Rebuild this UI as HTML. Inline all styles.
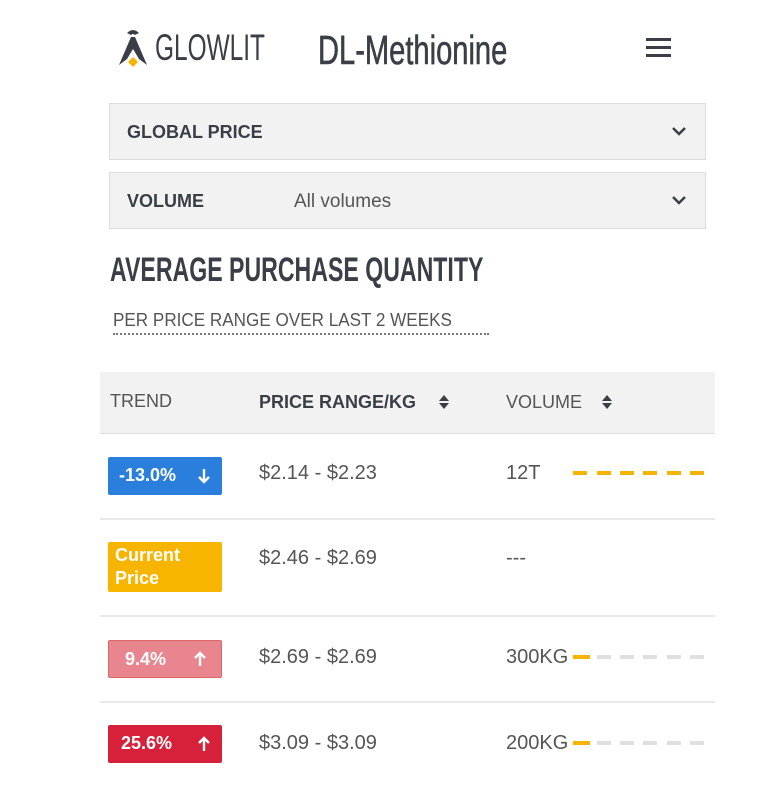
<!DOCTYPE html>
<html><head><style>
body{margin:0;background:#fff;width:783px;height:786px;overflow:hidden;font-family:"Liberation Sans",sans-serif;color:#444;position:relative}
.a{position:absolute}
.cond{display:inline-block;transform:scaleX(.78);transform-origin:left center;white-space:nowrap}
.dd{position:absolute;left:109px;width:597px;height:57px;background:#f2f2f2;border:1px solid #ddd;box-sizing:border-box}
.dd b{position:absolute;left:17px;top:18px;font-size:18px;color:#3a3f47}
.chev{position:absolute;right:18px;top:21px}
.badge{position:absolute;left:108px;width:114px;border-radius:2px;color:#fff;font-weight:bold;font-size:18px;box-sizing:border-box}
.pr{position:absolute;left:259px;font-size:19px;color:#555}
.vol{position:absolute;left:506px;font-size:19px;color:#555}
.sep{position:absolute;left:100px;width:615px;height:2px;background:#e8e8e8}
.bars{position:absolute;left:573px;width:134px;height:4px}
.bars i{position:absolute;top:0;width:14px;height:4px;background:#e0e0e0}
.ar{position:absolute;top:10px}
</style></head><body>
<svg class="a" style="left:117px;top:27px" width="32" height="42" viewBox="0 0 32 42">
<path d="M10 6 Q16 0 22 6 L18 8 Q16 6 14 8Z" fill="#3a3f47"/>
<path d="M14 10 L18 10 L30 38 L22 32 L16 22 L10 32 L2 38Z" fill="#3a3f47"/>
<path d="M16 30 L21 35 L16 40 L11 35Z" fill="#f5b400"/>
</svg>
<div class="a" style="left:155px;top:27px;font-size:37px;color:#3a3f47"><span class="cond" style="transform:scaleX(.66)">GLOWLIT</span></div>
<div class="a" style="left:318px;top:27px;font-size:41px;color:#3a3f47;-webkit-text-stroke:.6px #3a3f47"><span class="cond" style="transform:scaleX(.71)">DL-Methionine</span></div>
<div class="a" style="left:646px;top:38px;width:25px;height:3px;background:#3a3f47"></div>
<div class="a" style="left:646px;top:46px;width:25px;height:3px;background:#3a3f47"></div>
<div class="a" style="left:646px;top:54px;width:25px;height:3px;background:#3a3f47"></div>
<div class="dd" style="top:103px"><b>GLOBAL PRICE</b><svg class="chev" width="16" height="12"><path d="M2 3 L8 9 L14 3" stroke="#3a3f47" stroke-width="2.5" fill="none"/></svg></div>
<div class="dd" style="top:172px"><b>VOLUME</b><span style="position:absolute;left:184px;top:18px;font-size:19px;color:#555">All volumes</span><svg class="chev" width="16" height="12"><path d="M2 3 L8 9 L14 3" stroke="#3a3f47" stroke-width="2.5" fill="none"/></svg></div>
<div class="a" style="left:110px;top:251px;font-size:34px;font-weight:bold;color:#3a3f47"><span class="cond" style="transform:scaleX(.68)">AVERAGE PURCHASE QUANTITY</span></div>
<div class="a" style="left:113px;top:310px;font-size:18px;color:#555;border-bottom:2px dotted #777;padding-bottom:2px;width:376px;white-space:nowrap;overflow:hidden"><span class="cond" style="transform:scaleX(.95)">PER PRICE RANGE OVER LAST 2 WEEKS</span></div>
<div class="a" style="left:100px;top:372px;width:615px;height:61px;background:#f2f2f2;border-bottom:1px solid #e0e0e0"></div>
<div class="a" style="left:110px;top:391px;font-size:18px;color:#555">TREND</div>
<div class="a" style="left:259px;top:392px;font-size:18px;font-weight:bold;color:#3a3f47">PRICE RANGE/KG</div>
<svg class="a" style="left:438px;top:394px" width="12" height="16"><path d="M1 7 L6 1 L11 7Z M1 9 L6 15 L11 9Z" fill="#3a3f47"/></svg>
<div class="a" style="left:506px;top:392px;font-size:18px;color:#555">VOLUME</div>
<svg class="a" style="left:601px;top:394px" width="12" height="16"><path d="M1 7 L6 1 L11 7Z M1 9 L6 15 L11 9Z" fill="#3a3f47"/></svg>
<div class="badge" style="top:457px;height:38px;background:#2a7fdc;padding:8px 0 0 11px">-13.0%<svg class="ar" style="left:89px" width="14" height="18"><path d="M7 2 V15 M2 10 L7 15 L12 10" stroke="#fff" stroke-width="2.4" fill="none"/></svg></div>
<div class="pr" style="top:462px;font-size:20px">$2.14 - $2.23</div>
<div class="vol" style="top:462px;font-size:20px">12T</div>
<div class="bars" style="top:471px"><i style="left:0;background:#f5b400"></i><i style="left:24px;background:#f5b400"></i><i style="left:47px;background:#f5b400"></i><i style="left:70px;background:#f5b400"></i><i style="left:94px;background:#f5b400"></i><i style="left:117px;background:#f5b400"></i></div>
<div class="sep" style="top:518px"></div>
<div class="badge" style="top:542px;height:50px;background:#f8b500;padding:2px 0 0 7px;line-height:23px">Current<br>Price</div>
<div class="pr" style="top:547px;font-size:20px">$2.46 - $2.69</div>
<div class="vol" style="top:547px;font-size:20px">---</div>
<div class="sep" style="top:615px"></div>
<div class="badge" style="top:640px;height:38px;background:#e8858f;border:1px solid #d66;padding:8px 0 0 16px">9.4%<svg class="ar" style="left:84px;top:9px" width="14" height="18"><path d="M7 16 V3 M2 8 L7 3 L12 8" stroke="#fff" stroke-width="2.4" fill="none"/></svg></div>
<div class="pr" style="top:646px;font-size:20px">$2.69 - $2.69</div>
<div class="vol" style="top:646px;font-size:20px">300KG</div>
<div class="bars" style="top:655px"><i style="left:0;background:#f5b400;width:17px"></i><i style="left:24px"></i><i style="left:47px"></i><i style="left:70px"></i><i style="left:94px"></i><i style="left:117px"></i></div>
<div class="sep" style="top:701px"></div>
<div class="badge" style="top:725px;height:38px;background:#d7203a;padding:8px 0 0 13px">25.6%<svg class="ar" style="left:89px" width="14" height="18"><path d="M7 16 V3 M2 8 L7 3 L12 8" stroke="#fff" stroke-width="2.4" fill="none"/></svg></div>
<div class="pr" style="top:732px;font-size:20px">$3.09 - $3.09</div>
<div class="vol" style="top:732px;font-size:20px">200KG</div>
<div class="bars" style="top:741px"><i style="left:0;background:#f5b400;width:17px"></i><i style="left:24px"></i><i style="left:47px"></i><i style="left:70px"></i><i style="left:94px"></i><i style="left:117px"></i></div>
</body></html>
